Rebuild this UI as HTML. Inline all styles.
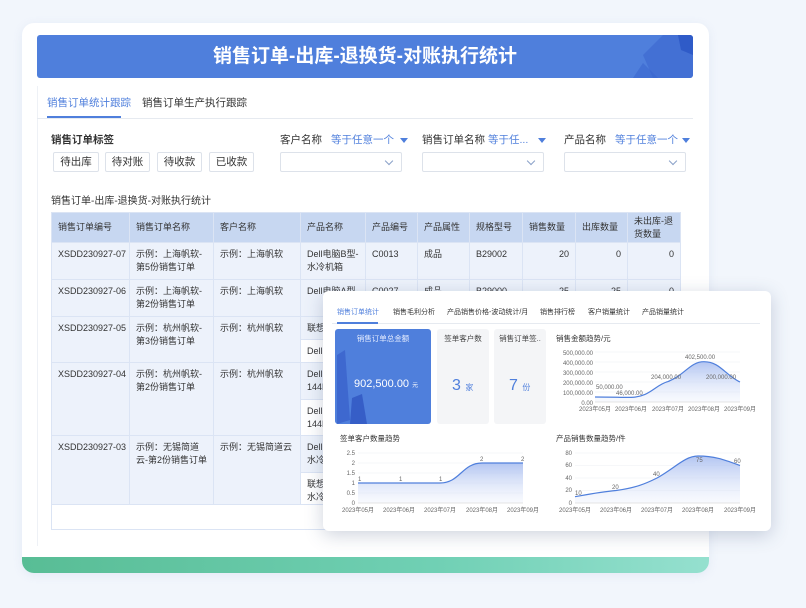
<!DOCTYPE html>
<html><head><meta charset="utf-8"><style>
*{margin:0;padding:0;box-sizing:border-box}
body{width:806px;height:608px;background:#f2f6fc;font-family:"Liberation Sans","Noto Sans CJK SC",sans-serif;position:relative;overflow:hidden;color:#333}
.a{position:absolute;white-space:nowrap}
.card{left:22px;top:23px;width:687px;height:550px;background:#fff;border-radius:12px;box-shadow:0 2px 10px rgba(120,150,200,.12);overflow:hidden}
.green{left:22px;top:557px;width:687px;height:16px;border-radius:0 0 12px 12px;background:linear-gradient(90deg,#58bd95,#70d0b4 60%,#95e0cf)}
.hdr{left:37px;top:35px;width:656px;height:43px;background:#4f7fdc;border-radius:3px;overflow:hidden;color:#fff;font-size:19px;font-weight:bold;text-align:center;line-height:43px}
.btn{top:152px;height:20px;border:1px solid #dde2ea;border-radius:2px;font-size:10.5px;line-height:18px;text-align:center;color:#333;background:#fff}
.sel{top:152px;height:20px;width:122px;border:1px solid #dde2ea;border-radius:2px;background:#fff}
.sel:after{content:"";position:absolute;right:9px;top:5px;width:5px;height:5px;border-right:1px solid #8aa0c8;border-bottom:1px solid #8aa0c8;transform:rotate(45deg)}
.lbl{font-size:10.5px;color:#333}
.blue{font-size:10.5px;color:#4f7fdc}
.tri{display:inline-block;width:0;height:0;border-left:4px solid transparent;border-right:4px solid transparent;border-top:5px solid #4f7fdc;margin-left:6px;vertical-align:middle}
table{position:absolute;left:51px;top:212px;border-collapse:collapse;font-size:9px;color:#333;table-layout:fixed;width:629px}
td,th{border:1px solid #dbe4f4;vertical-align:top;padding:5px 6px 0;font-weight:normal;text-align:left;line-height:13px;background:#edf2fb;white-space:nowrap;overflow:hidden}
th{background:#c7d7f1;vertical-align:middle;padding:0 6px}
td.r{text-align:right}
td.w{background:#fff}
.dash{left:323px;top:291px;width:448px;height:240px;background:#fff;border-radius:6px;box-shadow:0 4px 18px rgba(60,80,120,.25)}
</style></head><body>
<div class="a card"></div>
<div class="a green"></div>
<div class="a hdr">销售订单-出库-退换货-对账执行统计
<svg class="a" style="right:0;top:0" width="110" height="43"><polygon points="80,0 110,0 110,43 70,43 60,20" fill="#3e6ad0" opacity=".7"/><polygon points="95,0 110,0 110,20 98,15" fill="#2f5bc8"/><polygon points="50,43 60,28 75,43" fill="#3a66cf" opacity=".6"/></svg></div>
<div class="a" style="left:37px;top:86px;width:656px;height:460px;border-left:1px solid #eef1f6"></div>
<div class="a" style="left:37px;top:118px;width:656px;height:1px;background:#e6eaf0"></div>
<div class="a" style="left:47px;top:95px;font-size:10.5px;color:#4f7fdc">销售订单统计跟踪</div>
<div class="a" style="left:47px;top:116px;width:74px;height:2px;background:#4f7fdc"></div>
<div class="a" style="left:142px;top:95px;font-size:10.5px;color:#333">销售订单生产执行跟踪</div>
<div class="a" style="left:51px;top:132px;font-size:10.5px;font-weight:bold">销售订单标签</div>
<div class="a btn" style="left:53px;width:46px">待出库</div>
<div class="a btn" style="left:105px;width:45px">待对账</div>
<div class="a btn" style="left:157px;width:45px">待收款</div>
<div class="a btn" style="left:209px;width:45px">已收款</div>
<div class="a lbl" style="left:280px;top:132px">客户名称</div><div class="a blue" style="left:331px;top:132px">等于任意一个<span class="tri"></span></div>
<div class="a sel" style="left:280px"></div>
<div class="a lbl" style="left:422px;top:132px">销售订单名称</div><div class="a blue" style="left:488px;top:132px">等于任...<span class="tri" style="margin-left:10px"></span></div>
<div class="a sel" style="left:422px"></div>
<div class="a lbl" style="left:564px;top:132px">产品名称</div><div class="a blue" style="left:615px;top:132px">等于任意一个<span class="tri" style="margin-left:4px"></span></div>
<div class="a sel" style="left:564px"></div>
<div class="a" style="left:51px;top:192px;font-size:10px">销售订单-出库-退换货-对账执行统计</div>
<div class="a" style="left:51px;top:212px;width:629px;height:318px;border:1px solid #dbe4f4;border-top:none"></div>
<table>
<colgroup><col style="width:78px"><col style="width:84px"><col style="width:87px"><col style="width:65px"><col style="width:52px"><col style="width:52px"><col style="width:53px"><col style="width:53px"><col style="width:52px"><col style="width:53px"></colgroup>
<tr style="height:30px"><th>销售订单编号</th><th>销售订单名称</th><th>客户名称</th><th>产品名称</th><th>产品编号</th><th>产品属性</th><th>规格型号</th><th>销售数量</th><th>出库数量</th><th>未出库-退<br>货数量</th></tr>
<tr style="height:37px"><td>XSDD230927-07</td><td>示例：上海帆软-<br>第5份销售订单</td><td>示例：上海帆软</td><td>Dell电脑B型-<br>水冷机箱</td><td>C0013</td><td>成品</td><td>B29002</td><td class="r">20</td><td class="r">0</td><td class="r">0</td></tr>
<tr style="height:37px"><td>XSDD230927-06</td><td>示例：上海帆软-<br>第2份销售订单</td><td>示例：上海帆软</td><td>Dell电脑A型</td><td>C0027</td><td>成品</td><td>B29000</td><td class="r">25</td><td class="r">25</td><td class="r">0</td></tr>
<tr style="height:23px"><td rowspan="2">XSDD230927-05</td><td rowspan="2">示例：杭州帆软-<br>第3份销售订单</td><td rowspan="2">示例：杭州帆软</td><td>联想</td><td></td><td></td><td></td><td></td><td></td><td></td></tr>
<tr style="height:23px"><td class="w">Dell</td><td class="w"></td><td class="w"></td><td class="w"></td><td class="w"></td><td class="w"></td><td class="w"></td></tr>
<tr style="height:37px"><td rowspan="2">XSDD230927-04</td><td rowspan="2">示例：杭州帆软-<br>第2份销售订单</td><td rowspan="2">示例：杭州帆软</td><td>Dell电脑<br>144H</td><td></td><td></td><td></td><td></td><td></td><td></td></tr>
<tr style="height:36px"><td class="w">Dell电脑<br>144H</td><td class="w"></td><td class="w"></td><td class="w"></td><td class="w"></td><td class="w"></td><td class="w"></td></tr>
<tr style="height:37px"><td rowspan="2">XSDD230927-03</td><td rowspan="2">示例：无锡简道<br>云-第2份销售订单</td><td rowspan="2">示例：无锡简道云</td><td>Dell电脑<br>水冷</td><td></td><td></td><td></td><td></td><td></td><td></td></tr>
<tr style="height:28px"><td class="w">联想电脑<br>水冷</td><td class="w"></td><td class="w"></td><td class="w"></td><td class="w"></td><td class="w"></td><td class="w"></td></tr>
</table>
<div class="a dash"></div>
<svg class="a" style="left:0;top:0" width="806" height="608" font-family="Liberation Sans,Noto Sans CJK SC,sans-serif">
<g font-size="7" fill="#333">
<text x="337" y="314" fill="#4f7fdc">销售订单统计</text>
<text x="393" y="314">销售毛利分析</text><text x="447" y="314">产品销售价格-波动统计/月</text>
<text x="540" y="314">销售排行榜</text><text x="588" y="314">客户销量统计</text><text x="642" y="314">产品销量统计</text>
</g>
<rect x="332" y="323" width="428" height="1" fill="#e6eaf0"/><rect x="337" y="322" width="41" height="2" fill="#4f7fdc"/>
<rect x="335" y="329" width="96" height="95" rx="3" fill="#4f7fdc"/>
<polygon points="337,408 337,355 345,350 350,420 337,424" fill="#3a63cc" opacity=".8"/><polygon points="350,424 352,398 362,394 367,424" fill="#2f56c2" opacity=".8"/>
<text x="383" y="341" font-size="7.5" fill="#e6edff" text-anchor="middle">销售订单总金额</text>
<text x="354" y="387" font-size="11" fill="#fff">902,500.00 <tspan font-size="6">元</tspan></text>
<rect x="437" y="329" width="52" height="95" rx="3" fill="#f4f5f7"/><rect x="494" y="329" width="52" height="95" rx="3" fill="#f4f5f7"/>
<text x="463" y="341" font-size="7.5" fill="#444" text-anchor="middle">签单客户数</text>
<text x="520" y="341" font-size="7.5" fill="#444" text-anchor="middle">销售订单签..</text>
<text x="452" y="390" font-size="16" fill="#4f7fdc">3 <tspan font-size="8">家</tspan></text>
<text x="509" y="390" font-size="16" fill="#4f7fdc">7 <tspan font-size="8">份</tspan></text>
<defs><linearGradient id="g" x1="0" y1="0" x2="0" y2="1"><stop offset="0" stop-color="#9fb6ee" stop-opacity=".8"/><stop offset="1" stop-color="#e8eefb" stop-opacity=".3"/></linearGradient></defs>
<g font-size="6" fill="#666">
<text x="556" y="341" font-size="7.5" fill="#333">销售金额趋势/元</text>
<text x="593" y="355" text-anchor="end">500,000.00</text><text x="593" y="365" text-anchor="end">400,000.00</text><text x="593" y="375" text-anchor="end">300,000.00</text><text x="593" y="385" text-anchor="end">200,000.00</text><text x="593" y="395" text-anchor="end">100,000.00</text><text x="593" y="405" text-anchor="end">0.00</text>
<path d="M595,352H740M595,362H740M595,372H740M595,382H740M595,392H740" stroke="#eef0f4" stroke-width=".6"/>
<path d="M595,397 C615,397 620,397.5 631,397.4 C650,397 655,385 668,381.6 C685,375 690,361.7 704,361.7 C720,361.7 725,375 740,382 L740,402 L595,402Z" fill="url(#g)"/>
<path d="M595,397 C615,397 620,397.5 631,397.4 C650,397 655,385 668,381.6 C685,375 690,361.7 704,361.7 C720,361.7 725,375 740,382" fill="none" stroke="#4f7fdc" stroke-width="1.2"/>
<path d="M595,402H740" stroke="#ccc" stroke-width=".6"/>
<text x="596" y="389">50,000.00</text><text x="616" y="395">46,000.00</text><text x="651" y="379">204,000.00</text><text x="685" y="359">402,500.00</text><text x="706" y="379">200,000.00</text>
<text x="595" y="411" text-anchor="middle">2023年05月</text><text x="631" y="411" text-anchor="middle">2023年06月</text><text x="668" y="411" text-anchor="middle">2023年07月</text><text x="704" y="411" text-anchor="middle">2023年08月</text><text x="740" y="411" text-anchor="middle">2023年09月</text>

<text x="340" y="441" font-size="7.5" fill="#333">签单客户数量趋势</text>
<text x="355" y="455" text-anchor="end">2.5</text><text x="355" y="465" text-anchor="end">2</text><text x="355" y="475" text-anchor="end">1.5</text><text x="355" y="485" text-anchor="end">1</text><text x="355" y="495" text-anchor="end">0.5</text><text x="355" y="505" text-anchor="end">0</text>
<path d="M358,453H523M358,463H523M358,473H523M358,483H523M358,493H523" stroke="#eef0f4" stroke-width=".6"/>
<path d="M358,483 L440,483 C460,483 462,463 482,463 L523,463 L523,503 L358,503Z" fill="url(#g)"/>
<path d="M358,483 L440,483 C460,483 462,463 482,463 L523,463" fill="none" stroke="#4f7fdc" stroke-width="1.2"/>
<path d="M358,503H523" stroke="#ccc" stroke-width=".6"/>
<text x="358" y="481">1</text><text x="399" y="481">1</text><text x="439" y="481">1</text><text x="480" y="461">2</text><text x="521" y="461">2</text>
<text x="358" y="512" text-anchor="middle">2023年05月</text><text x="399" y="512" text-anchor="middle">2023年06月</text><text x="440" y="512" text-anchor="middle">2023年07月</text><text x="482" y="512" text-anchor="middle">2023年08月</text><text x="523" y="512" text-anchor="middle">2023年09月</text>

<text x="556" y="441" font-size="7.5" fill="#333">产品销售数量趋势/件</text>
<text x="572" y="455" text-anchor="end">80</text><text x="572" y="467" text-anchor="end">60</text><text x="572" y="480" text-anchor="end">40</text><text x="572" y="492" text-anchor="end">20</text><text x="572" y="505" text-anchor="end">0</text>
<path d="M575,453H740M575,465.5H740M575,478H740M575,490.5H740" stroke="#eef0f4" stroke-width=".6"/>
<path d="M575,496.7 C590,494 600,492 616,490.5 C635,488 645,484 657,478 C675,468 685,456 698,456 C715,456 725,460 740,465.5 L740,503 L575,503Z" fill="url(#g)"/>
<path d="M575,496.7 C590,494 600,492 616,490.5 C635,488 645,484 657,478 C675,468 685,456 698,456 C715,456 725,460 740,465.5" fill="none" stroke="#4f7fdc" stroke-width="1.2"/>
<path d="M575,503H740" stroke="#ccc" stroke-width=".6"/>
<text x="575" y="495">10</text><text x="612" y="489">20</text><text x="653" y="476">40</text><text x="696" y="462">75</text><text x="734" y="463">60</text>
<text x="575" y="512" text-anchor="middle">2023年05月</text><text x="616" y="512" text-anchor="middle">2023年06月</text><text x="657" y="512" text-anchor="middle">2023年07月</text><text x="698" y="512" text-anchor="middle">2023年08月</text><text x="740" y="512" text-anchor="middle">2023年09月</text>
</g>
</svg>
</body></html>
